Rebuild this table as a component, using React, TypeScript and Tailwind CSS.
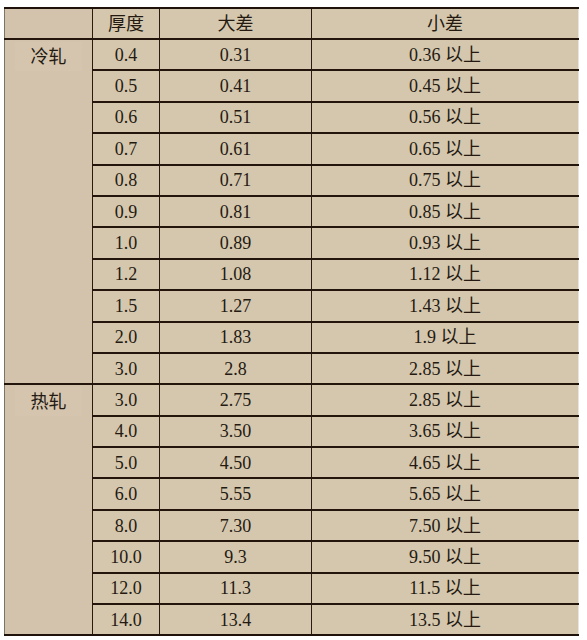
const cold: [string, string, string][] = [
  ["0.4", "0.31", "0.36"],
  ["0.5", "0.41", "0.45"],
  ["0.6", "0.51", "0.56"],
  ["0.7", "0.61", "0.65"],
  ["0.8", "0.71", "0.75"],
  ["0.9", "0.81", "0.85"],
  ["1.0", "0.89", "0.93"],
  ["1.2", "1.08", "1.12"],
  ["1.5", "1.27", "1.43"],
  ["2.0", "1.83", "1.9"],
  ["3.0", "2.8", "2.85"],
];

const hot: [string, string, string][] = [
  ["3.0", "2.75", "2.85"],
  ["4.0", "3.50", "3.65"],
  ["5.0", "4.50", "4.65"],
  ["6.0", "5.55", "5.65"],
  ["8.0", "7.30", "7.50"],
  ["10.0", "9.3", "9.50"],
  ["12.0", "11.3", "11.5"],
  ["14.0", "13.4", "13.5"],
];

const cell = "border-l-[1.5px] border-[#2a1a10] text-center align-middle";

function Section({ label, rows }: { label: string; rows: [string, string, string][] }) {
  return (
    <>
      {rows.map(([t, big, small], i) => (
        <tr key={t + i} className="h-[31.4px] border-t-2 border-[#24150c]">
          {i === 0 ? (
            <td rowSpan={rows.length} className="bg-[#d3c3ad] pt-[2px] text-center align-top">
              <div className="mx-[10px] flex h-[29px] items-center justify-center bg-[#d5c5af]">{label}</div>
            </td>
          ) : null}
          <td className={cell}>{t}</td>
          <td className={cell}>{big}</td>
          <td className={cell}>
            {small} 以上
          </td>
        </tr>
      ))}
    </>
  );
}

export default function App() {
  return (
    <div className="h-[640px] w-[587px] overflow-hidden bg-white pt-[7px] text-[#241a12] [font-family:'Liberation_Serif','Noto_Sans_CJK_SC',serif]">
      <table className="ml-[4px] w-[575px] table-fixed border-collapse border-b-2 border-l border-r border-t-2 border-b-[#1e120a] border-l-[#7d7469] border-r-[#ebe4d8] border-t-[#1e120a] bg-[#d5c7ad] text-[18px] leading-none">
        <colgroup>
          <col className="w-[88px]" />
          <col className="w-[67px]" />
          <col className="w-[152px]" />
          <col />
        </colgroup>
        <thead>
          <tr className="h-[31px]">
            <th className="bg-[#d3c3ad] font-normal"></th>
            <th className={cell + " font-normal"}>厚度</th>
            <th className={cell + " font-normal"}>大差</th>
            <th className={cell + " font-normal"}>小差</th>
          </tr>
        </thead>
        <tbody>
          <Section label="冷轧" rows={cold} />
          <Section label="热轧" rows={hot} />
        </tbody>
      </table>
    </div>
  );
}
